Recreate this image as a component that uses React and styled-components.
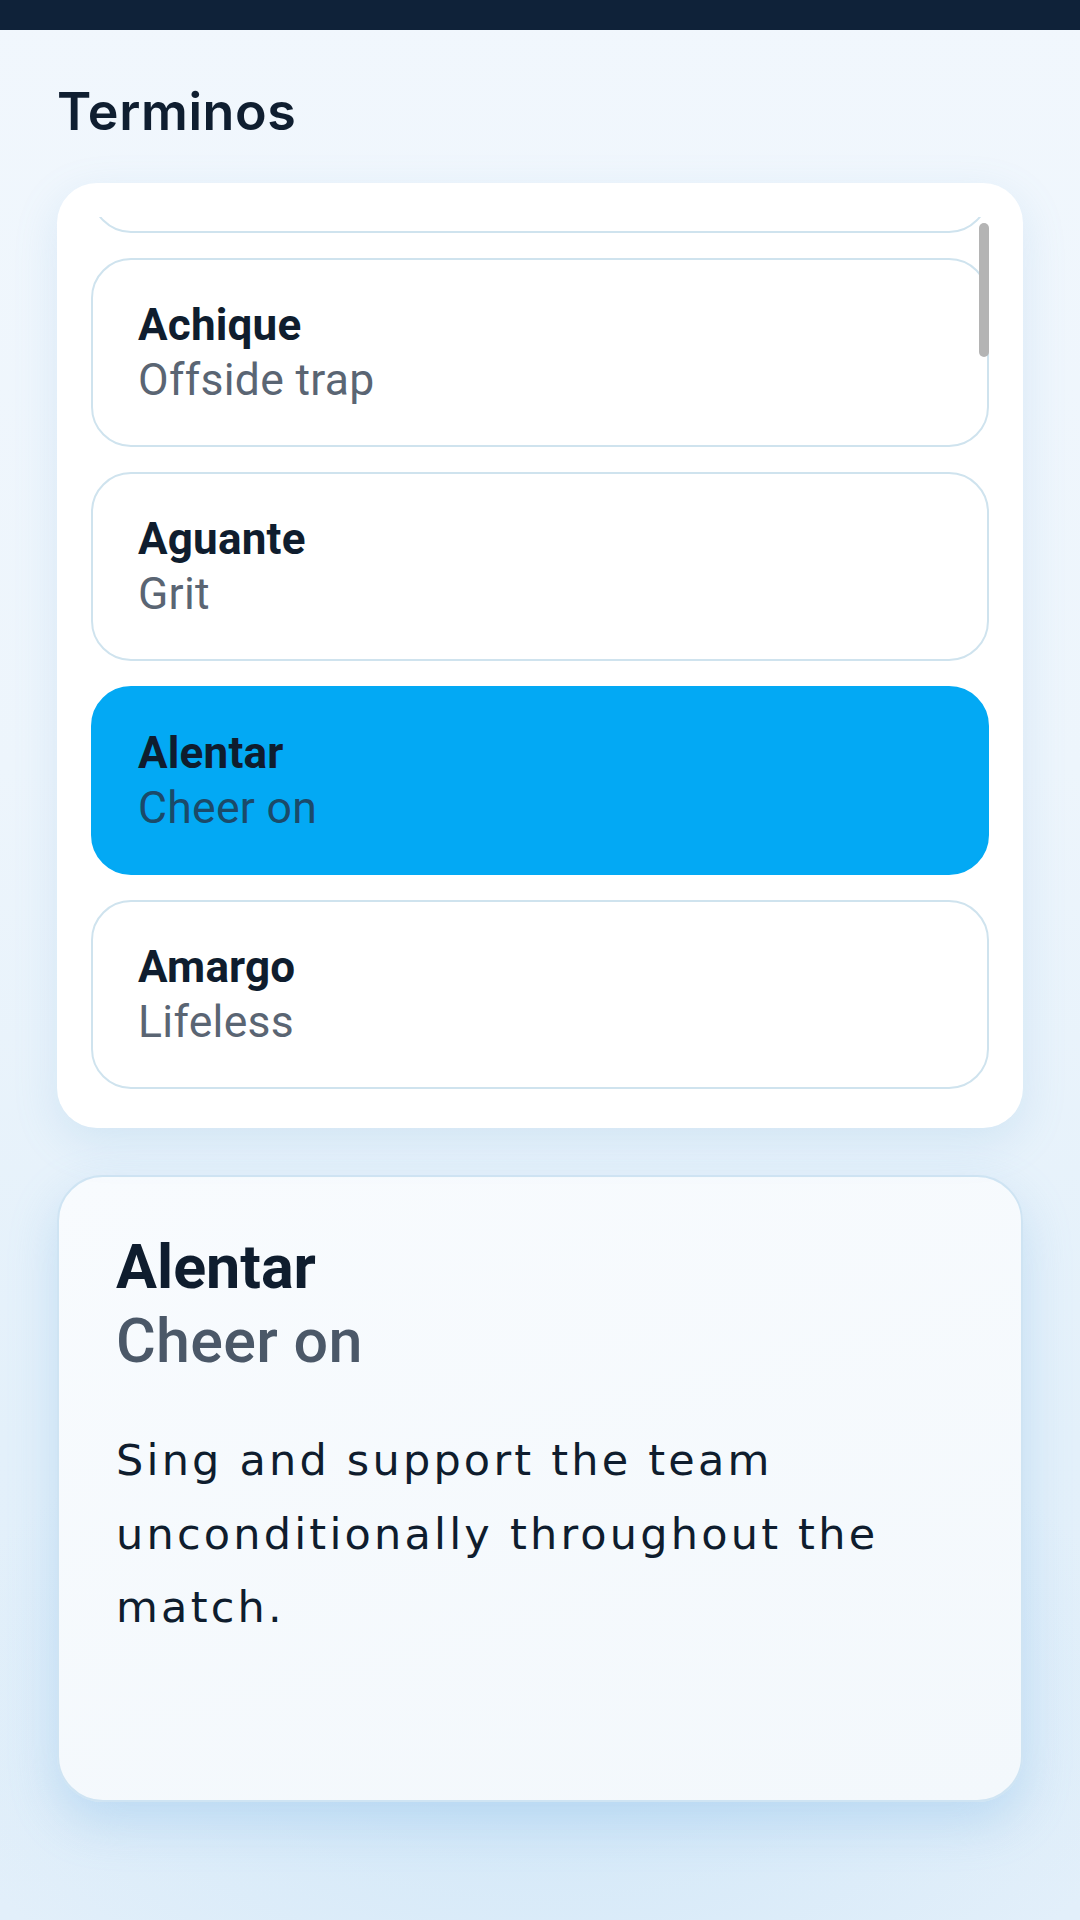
import React from 'react';
import styled, { createGlobalStyle } from 'styled-components';

const Global = createGlobalStyle`
  html, body { margin: 0; padding: 0; }
  body {
    background: #e4f0fa;
    font-family: Roboto, "Noto Sans", sans-serif;
    -webkit-font-smoothing: antialiased;
  }
  *, *::before, *::after { box-sizing: border-box; }
`;

const Page = styled.div`
  width: 1080px;
  min-height: 1920px;
  display: flex;
  flex-direction: column;
  background:
    radial-gradient(ellipse 900px 500px at 50% 1720px, rgba(205, 229, 247, 0.9), rgba(205, 229, 247, 0) 70%),
    linear-gradient(180deg, #f1f7fd 0%, #edf5fc 40%, #e3f0fa 75%, #e2effa 100%);
`;

const StatusBar = styled.div`
  height: 30px;
  flex-shrink: 0;
  background: #0f2239;
`;

const Content = styled.main`
  display: flex;
  flex-direction: column;
  padding: 48px 57px 0;
`;

const Heading = styled.h1`
  margin: 0;
  font-family: Inter, "Open Sans", sans-serif;
  font-weight: 600;
  font-size: 52px;
  line-height: 68px;
  color: #0f1e30;
  letter-spacing: 0.6px;
`;

const ListCard = styled.section`
  position: relative;
  margin-top: 37px;
  padding: 34px;
  background: #ffffff;
  border-radius: 40px;
  box-shadow: 0 14px 44px rgba(110, 170, 215, 0.18);
`;

const Viewport = styled.div`
  height: 877px;
  overflow: hidden;
`;

const List = styled.ul`
  list-style: none;
  margin: 0;
  padding: 0;
  display: flex;
  flex-direction: column;
  gap: 25px;
  margin-top: ${(p) => -p.$offset}px;
`;

const Item = styled.li`
  flex-shrink: 0;
  height: 189px;
  padding: 0 45px;
  display: flex;
  flex-direction: column;
  justify-content: center;
  border-radius: 40px;
  border: 2px solid ${(p) => (p.$selected ? '#03a9f4' : '#cfe3ee')};
  background: ${(p) => (p.$selected ? '#03a9f4' : '#ffffff')};
  visibility: visible;
  & > * { visibility: ${(p) => (p.$scrolledOut ? 'hidden' : 'visible')}; }
`;

const ItemTitle = styled.div`
  font-family: Roboto, sans-serif;
  font-weight: 700;
  font-size: 44px;
  line-height: 55px;
  color: #0f1d2e;
  letter-spacing: 0.2px;
`;

const ItemSub = styled.div`
  font-family: Roboto, sans-serif;
  font-weight: 400;
  font-size: 44.5px;
  line-height: 55px;
  color: ${(p) => (p.$selected ? '#1b4a69' : '#5a6573')};
  letter-spacing: 0.3px;
`;

const Thumb = styled.div`
  position: absolute;
  top: 40px;
  right: 34px;
  width: 10px;
  height: 134px;
  border-radius: 5px;
  background: #b4b4b4;
`;

const DetailCard = styled.section`
  margin-top: 47px;
  min-height: 627px;
  padding: 53px 57px;
  border-radius: 46px;
  border: 2px solid #cfe4f3;
  background: linear-gradient(165deg, #f8fbfe 0%, #f3f8fc 100%);
  box-shadow: 0 20px 48px rgba(120, 180, 230, 0.32);
`;

const DetailTitle = styled.h2`
  margin: 0;
  font-family: Roboto, sans-serif;
  font-weight: 700;
  font-size: 61px;
  line-height: 74px;
  color: #0f1d2e;
`;

const DetailSub = styled.div`
  font-family: Roboto, sans-serif;
  font-weight: 500;
  font-size: 61px;
  line-height: 74px;
  color: #4b5868;
  letter-spacing: 0.3px;
`;

const DetailBody = styled.p`
  margin: 46px 0 0;
  font-family: "DejaVu Sans", "Open Sans", sans-serif;
  font-weight: 400;
  font-size: 43px;
  line-height: 73.5px;
  letter-spacing: 3.2px;
  color: #0f1d2e;
`;

const terms = [
  { term: 'Abrazo', meaning: 'Hug' },
  { term: 'Achique', meaning: 'Offside trap' },
  { term: 'Aguante', meaning: 'Grit' },
  { term: 'Alentar', meaning: 'Cheer on' },
  { term: 'Amargo', meaning: 'Lifeless' },
];

const selected = 'Alentar';

export default function App() {
  return (
    <>
      <Global />
      <Page>
        <StatusBar />
        <Content>
          <Heading>Terminos</Heading>
          <ListCard>
            <Viewport>
              <List $offset={173}>
                {terms.map((t, i) => (
                  <Item
                    key={t.term}
                    $selected={t.term === selected}
                    $scrolledOut={i === 0}
                  >
                    <ItemTitle>{t.term}</ItemTitle>
                    <ItemSub $selected={t.term === selected}>{t.meaning}</ItemSub>
                  </Item>
                ))}
              </List>
            </Viewport>
            <Thumb />
          </ListCard>
          <DetailCard>
            <DetailTitle>Alentar</DetailTitle>
            <DetailSub>Cheer on</DetailSub>
            <DetailBody>
              Sing and support the team unconditionally throughout the match.
            </DetailBody>
          </DetailCard>
        </Content>
      </Page>
    </>
  );
}
